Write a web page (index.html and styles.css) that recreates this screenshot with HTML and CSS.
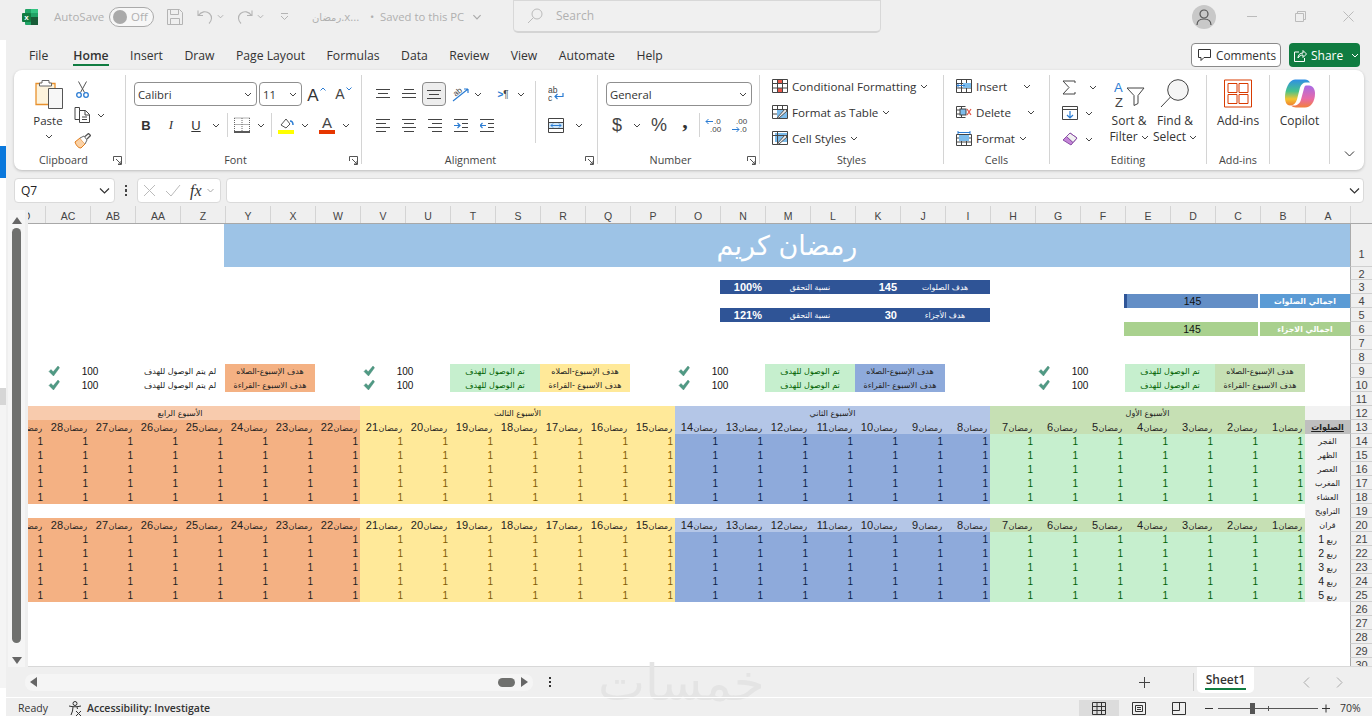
FILE: index.html
```html
<!DOCTYPE html>
<html lang="en">
<head>
<meta charset="utf-8">
<title>Excel</title>
<link rel="stylesheet" href="styles.css">
</head>
<body>
<svg class="sprite" aria-hidden="true">
<symbol id="ch" viewBox="0 0 8 5"><path d="M1 1l3 3 3-3" fill="none" stroke="#444" stroke-width="1"/></symbol>
<symbol id="chg" viewBox="0 0 8 5"><path d="M1 1l3 3 3-3" fill="none" stroke="#aaa" stroke-width="1"/></symbol>
<symbol id="launch" viewBox="0 0 9 9"><path d="M.5 5V.5H8.5V8.5H5M3 3l5 5M8 5v3H5" fill="none" stroke="#555"/></symbol>
<symbol id="ck" viewBox="0 0 12 12"><path d="M1 6.500l2-2 2.200 2.300L10 1l1.500 1.800-6 8.200z" fill="#4f9a84" stroke="#3f7f6c" stroke-width=".4"/></symbol>
</svg>
<div class="strip"><span class="s-a"></span><span class="s-b"></span><span class="s-c"></span><span class="s-d"></span><span class="s-e"></span><span class="s-f"></span><span class="s-g"></span></div>
<div class="app">
  <header class="titlebar">
    <svg class="xl" width="16" height="16" viewBox="0 0 16 16"><rect x="3" width="13" height="16" rx="1" fill="#21a366"/><rect x="9" y="8" width="7" height="8" fill="#185c37"/><rect x="9" y="0" width="7" height="4" fill="#33c481"/><rect y="4" width="9" height="9" rx="1" fill="#107c41"/><text x="4.500" y="11" text-anchor="middle" font-size="8" font-weight="700" fill="#fff" font-family="Liberation Sans">x</text></svg>
    <span class="autosave">AutoSave</span>
    <span class="toggle"><i class="knob"></i><span>Off</span></span>
    <svg class="save" width="16" height="16" viewBox="0 0 16 16"><path d="M.5.500h12l3 3v12H.5zM3.500.5v5h8v-5M3.500 15.500v-6h9v6" fill="none" stroke="#b4b4b4"/></svg>
    <svg class="undo" width="16" height="16" viewBox="0 0 16 16"><path d="M1 1.500v5h5M1.500 6.500C4 2.500 9 1.500 12.500 4.500c3 3 2.500 7-.5 10" fill="none" stroke="#b4b4b4" stroke-width="1.100"/></svg>
    <svg class="c6" width="7" height="5"><use href="#chg"/></svg>
    <svg class="redo" width="16" height="16" viewBox="0 0 16 16"><path d="M15 1.500v5h-5M14.500 6.500C12 2.500 7 1.500 3.500 4.500c-3 3-2.500 7 .5 10" fill="none" stroke="#b4b4b4" stroke-width="1.100"/></svg>
    <svg class="c6" width="7" height="5"><use href="#chg"/></svg>
    <svg class="qat" width="9" height="9" viewBox="0 0 9 9"><path d="M1 1.500h7M1 4l3.500 3.500L8 4" fill="none" stroke="#b4b4b4"/></svg>
    <span class="fname"><span class="ar">رمضان</span>.x...</span>
    <span class="saved">•&nbsp; Saved to this PC</span>
    <svg class="c9" width="10" height="6"><use href="#chg"/></svg>
    <div class="search">
      <svg width="16" height="16" viewBox="0 0 16 16"><circle cx="10" cy="6" r="5" fill="none" stroke="#bbb"/><path d="M6.500 9.500L1 15" stroke="#bbb"/></svg>
      <span>Search</span>
    </div>
    <span class="avatar"><svg width="16" height="16" viewBox="0 0 16 16"><circle cx="8" cy="5" r="4" fill="none" stroke="#555" stroke-width="1.200"/><path d="M1 16c0-4 3-6 7-6s7 2 7 6" fill="none" stroke="#555" stroke-width="1.200"/></svg></span>
    <svg class="w-min" width="10" height="2"><path d="M0 .5h10" stroke="#bbb"/></svg>
    <svg class="w-res" width="11" height="11" viewBox="0 0 11 11"><path d="M.5 2.500h8v8h-8zM2.500 2.500v-2h8v8h-2" fill="none" stroke="#bbb"/></svg>
    <svg class="w-cls" width="11" height="11" viewBox="0 0 11 11"><path d="M.5.500l10 10M10.500.5l-10 10" stroke="#bbb"/></svg>
  </header>

  <nav class="tabs">
    <span class="tab t-file">File</span>
    <span class="tab on">Home</span>
    <span class="tab">Insert</span>
    <span class="tab">Draw</span>
    <span class="tab">Page Layout</span>
    <span class="tab">Formulas</span>
    <span class="tab">Data</span>
    <span class="tab">Review</span>
    <span class="tab">View</span>
    <span class="tab">Automate</span>
    <span class="tab">Help</span>
    <span class="comments"><svg width="13" height="12" viewBox="0 0 13 12"><path d="M.5.500h12v8H6L3 11.500V8.500H.5z" fill="none" stroke="#333"/></svg>Comments</span>
    <span class="share"><svg width="13" height="13" viewBox="0 0 13 13"><path d="M5 3H.5v9.500h10V9M4 9c0-3 2-5 5-5V1.500l3.500 3.500L9 8.500V6C7 6 5 7 4 9z" fill="none" stroke="#fff"/></svg>Share<span class="sp-ch"><svg width="8" height="5"><path d="M1 1l3 3 3-3" fill="none" stroke="#fff"/></svg></span></span>
  </nav>

  <section class="ribbon">
    <div class="grp g-clip">
      <div class="body clip">
        <div class="paste">
          <svg width="28" height="31" viewBox="0 0 28 31"><path d="M1 5.500h19v21H1z" fill="#fdf3dc" stroke="#e8912d" stroke-width="1.300"/><path d="M7 5V2.500h7V5h2.500v3h-12V5z" fill="#fff" stroke="#666"/><path d="M13.500 10.500h14v20h-14z" fill="#f7f7f7" stroke="#555"/></svg>
          <span>Paste</span>
          <svg width="8" height="5"><use href="#ch"/></svg>
        </div>
        <div class="clip-col">
          <span class="bt w24"><svg width="13" height="17" viewBox="0 0 13 17"><path d="M2.500.5l6 11M10.500.5l-6 11" fill="none" stroke="#555"/><circle cx="3" cy="14" r="2.300" fill="none" stroke="#2b7cd3" stroke-width="1.300"/><circle cx="10" cy="14" r="2.300" fill="none" stroke="#2b7cd3" stroke-width="1.300"/></svg></span>
          <span class="row-c"><span class="bt w24"><svg width="16" height="16" viewBox="0 0 16 16"><path d="M5.500 3.500V.5H1v12h4.500M5.500 3.500h6l4 4v8h-10zM11 3.500V8h4.500M8 10h5M8 12.500h5" fill="none" stroke="#444"/></svg></span><svg class="clip-ch" width="8" height="5"><use href="#ch"/></svg></span>
          <span class="bt w24"><svg width="17" height="16" viewBox="0 0 17 16"><path d="M1 9l5-4 5 6-4 4c-3 0-5-3-6-6z" fill="#fbd2a6" stroke="#e07b1a"/><path d="M6 5l4-2 3 4-2 4" fill="#fff" stroke="#666"/><path d="M11 3.500L14.500.5 16.500 2.500 13 6" fill="none" stroke="#555" stroke-width="1.300"/></svg></span>
        </div>
      </div>
      <span class="gl">Clipboard</span>
      <svg class="launch" width="9" height="9"><use href="#launch"/></svg>
    </div>

    <div class="grp g-font">
      <div class="body">
        <div class="line">
          <span class="combo cb-font">Calibri<svg width="8" height="5"><use href="#ch"/></svg></span>
          <span class="combo cb-size">11<svg width="8" height="5"><use href="#ch"/></svg></span>
          <span class="bt w27 first-a"><span class="aa big">A</span><svg class="caret" width="6" height="4" viewBox="0 0 6 4"><path d="M.5 3.500L3 1l2.500 2.500" fill="none" stroke="#2b7cd3"/></svg></span>
          <span class="bt w27"><span class="aa">A</span><svg class="caret" width="6" height="4" viewBox="0 0 6 4"><path d="M.5.500L3 3 5.500.5" fill="none" stroke="#2b7cd3"/></svg></span>
        </div>
        <div class="line l2">
          <span class="bt w24 tb">B</span>
          <span class="bt w26 ti">I</span>
          <span class="bt w24 tu">U</span>
          <span class="bt w16"><svg width="8" height="5"><use href="#ch"/></svg></span>
          <i class="vs vs-f1"></i>
          <span class="bt w28"><svg width="16" height="16" viewBox="0 0 16 16"><path d="M.5 1h15M.5 1v13M15.500 1v13M8 1v13M.5 7.500h15" stroke="#666" stroke-dasharray="1 1" fill="none"/><path d="M0 15h16" stroke="#222" stroke-width="1.500"/></svg></span>
          <span class="bt w10"><svg width="8" height="5"><use href="#ch"/></svg></span>
          <i class="vs vs-f2"></i>
          <span class="bt w28"><svg width="16" height="17" viewBox="0 0 16 17"><path d="M3 8l5-6 4 5-4 4z" fill="#fff" stroke="#555"/><path d="M12 4c2 0 3 2 3 4" fill="none" stroke="#2b7cd3" stroke-width="1.500"/><rect y="13" width="16" height="4" fill="#ffff00"/></svg></span>
          <span class="bt w10"><svg width="8" height="5"><use href="#ch"/></svg></span>
          <span class="bt w28 fc"><span class="aa fca">A</span><i class="fcbar"></i></span>
          <span class="bt w10"><svg width="8" height="5"><use href="#ch"/></svg></span>
        </div>
      </div>
      <span class="gl">Font</span>
      <svg class="launch" width="9" height="9"><use href="#launch"/></svg>
    </div>

    <div class="grp g-align">
      <div class="body al-wrap">
        <div class="al-main">
          <div class="line">
            <span class="bt w26"><svg width="14" height="10" viewBox="0 0 14 10"><path d="M0 .5h14M2 4.500h10M0 8.500h14" stroke="#444"/></svg></span>
            <span class="bt w26"><svg width="14" height="10" viewBox="0 0 14 10"><path d="M2 .5h10M0 4.500h14M0 8.500h14" stroke="#444"/></svg></span>
            <span class="bt w24 sel"><svg width="14" height="10" viewBox="0 0 14 10"><path d="M0 1.500h14M2 5.500h10M0 9.500h14" stroke="#444"/></svg></span>
            <span class="bt w26 ml2"><svg width="18" height="16" viewBox="0 0 18 16"><path d="M1 15L16 3M16 3h-4M16 3v4" fill="none" stroke="#2b7cd3" stroke-width="1.200"/><text x="1" y="9" font-size="8" fill="#444" transform="rotate(-40 5 6)" font-family="Liberation Sans">ab</text></svg></span>
            <span class="bt w8"><svg width="8" height="5"><use href="#ch"/></svg></span>
            <span class="bt w24 ml9 para"><i class="para-a">&gt;</i>¶</span>
            <span class="bt w12"><svg width="8" height="5"><use href="#ch"/></svg></span>
          </div>
          <div class="line l2">
            <span class="bt w26"><svg width="14" height="13" viewBox="0 0 14 13"><path d="M0 .5h14M0 4.500h10M0 8.500h14M0 12.500h10" stroke="#444"/></svg></span>
            <span class="bt w26"><svg width="14" height="13" viewBox="0 0 14 13"><path d="M0 .5h14M2 4.500h10M0 8.500h14M2 12.500h10" stroke="#444"/></svg></span>
            <span class="bt w26"><svg width="14" height="13" viewBox="0 0 14 13"><path d="M0 .5h14M4 4.500h10M0 8.500h14M4 12.500h10" stroke="#444"/></svg></span>
            <span class="bt w26"><svg width="14" height="13" viewBox="0 0 14 13"><path d="M0 .5h14M8 4.500h6M8 8.500h6M0 12.500h14" stroke="#444"/><path d="M0 6.500h6M3.500 4L6 6.500 3.500 9" fill="none" stroke="#2b7cd3" stroke-width="1.200"/></svg></span>
            <span class="bt w26"><svg width="14" height="13" viewBox="0 0 14 13"><path d="M0 .5h14M8 4.500h6M8 8.500h6M0 12.500h14" stroke="#444"/><path d="M6 6.500H0M2.500 4L0 6.500 2.500 9" fill="none" stroke="#2b7cd3" stroke-width="1.200"/></svg></span>
          </div>
        </div>
        <i class="vs-tall"></i>
        <div class="al-side">
          <span class="bt w25"><svg width="16" height="16" viewBox="0 0 16 16"><text x="0" y="7" font-size="8.500" fill="#444" font-family="Liberation Sans">ab</text><text x="0" y="15" font-size="8.500" fill="#444" font-family="Liberation Sans">c</text><path d="M15 7v3.500H7M9.500 8L7 10.500 9.500 13" fill="none" stroke="#2b7cd3" stroke-width="1.200"/></svg></span>
          <span class="row-c merge"><span class="bt w25"><svg width="16" height="15" viewBox="0 0 16 15"><path d="M.5.500h15v14H.5zM.5 4.500h15M.5 10.500h15" fill="#fff" stroke="#444"/><rect x="1" y="5" width="14" height="5" fill="#cfe6f8"/><path d="M3 7.500h10M5 5.500l-2 2 2 2M11 5.500l2 2-2 2" fill="none" stroke="#2b7cd3"/></svg></span><svg class="merge-ch" width="8" height="5"><use href="#ch"/></svg></span>
        </div>
      </div>
      <span class="gl">Alignment</span>
      <svg class="launch" width="9" height="9"><use href="#launch"/></svg>
    </div>

    <div class="grp g-num">
      <div class="body">
        <div class="line"><span class="combo cb-num">General<svg width="8" height="5"><use href="#ch"/></svg></span></div>
        <div class="line l2">
          <span class="bt w22 sym">$</span>
          <span class="bt w18"><svg width="8" height="5"><use href="#ch"/></svg></span>
          <span class="bt w26 sym">%</span>
          <span class="bt w26 comma">,</span>
          <i class="vs vs-n"></i>
          <span class="bt w26"><svg width="17" height="16" viewBox="0 0 17 16"><text x="9" y="7" font-size="8" fill="#444" font-family="Liberation Sans">.0</text><text x="5" y="15" font-size="8" fill="#444" font-family="Liberation Sans">.00</text><path d="M8 4.500H1M3.500 2L1 4.500 3.500 7" fill="none" stroke="#2b7cd3"/></svg></span>
          <span class="bt w26"><svg width="17" height="16" viewBox="0 0 17 16"><text x="5" y="7" font-size="8" fill="#444" font-family="Liberation Sans">.00</text><text x="9" y="15" font-size="8" fill="#444" font-family="Liberation Sans">.0</text><path d="M1 12.500h7M5.500 10L8 12.500 5.500 15" fill="none" stroke="#2b7cd3"/></svg></span>
        </div>
      </div>
      <span class="gl">Number</span>
      <svg class="launch" width="9" height="9"><use href="#launch"/></svg>
    </div>

    <div class="grp g-sty">
      <div class="rows">
        <span class="ri"><svg width="16" height="14" viewBox="0 0 16 14"><path d="M.5.500h15v13H.5z" fill="#fff" stroke="#444"/><rect x="5" y="1" width="6" height="4" fill="#e8574a"/><rect x="5" y="9" width="6" height="4" fill="#e8574a"/><path d="M.5 4.500h15M.5 9h15M5.500.5v13M10.500.5v13" stroke="#444" fill="none"/></svg>Conditional Formatting<svg width="8" height="5"><use href="#ch"/></svg></span>
        <span class="ri"><svg width="16" height="14" viewBox="0 0 16 14"><path d="M.5.500h15v13H.5zM.5 4.500h15M.5 9h15M5.500.5v13M10.500.5v13" fill="#fff" stroke="#444"/><rect x="5" y="5" width="10" height="8" fill="#7cbcec"/><path d="M5 13l8-9 2 2-8 7z" fill="#eee" stroke="#555"/></svg>Format as Table<svg width="8" height="5"><use href="#ch"/></svg></span>
        <span class="ri"><svg width="16" height="14" viewBox="0 0 16 14"><path d="M.5.500h15v13H.5z" fill="#fff" stroke="#444"/><rect x="3" y="2" width="12" height="9" fill="#7cbcec"/><path d="M.5 4.500h15M5.500.5v13" stroke="#444" fill="none"/><path d="M5 13l8-9 2 2-8 7z" fill="#eee" stroke="#555"/></svg>Cell Styles<svg width="8" height="5"><use href="#ch"/></svg></span>
      </div>
      <span class="gl">Styles</span>
    </div>

    <div class="grp g-cells">
      <div class="rows">
        <span class="ri"><svg width="16" height="14" viewBox="0 0 16 14"><path d="M.5.500h15v13H.5zM.5 4.500h15M.5 9h15M5.500.5v13M10.500.5v13" fill="#fff" stroke="#444"/><rect x="7" y="4" width="8" height="5" fill="#7cbcec"/><path d="M9 6.500H1M3 4.500l-2 2 2 2" fill="none" stroke="#2b7cd3"/></svg><span class="lbl l-ins">Insert</span><svg width="8" height="5"><use href="#ch"/></svg></span>
        <span class="ri"><svg width="16" height="14" viewBox="0 0 16 14"><path d="M.5 1.500h9M.5 12.500h9M.5 1.500v11M5.500 1.500v11M.5 5h9M.5 9h9" fill="none" stroke="#444"/><rect x="4" y="4" width="6" height="6" fill="#7cbcec" stroke="#444"/><path d="M11 4l4 6M15 4l-4 6" stroke="#e8574a" stroke-width="1.300"/></svg><span class="lbl l-del">Delete</span><svg width="8" height="5"><use href="#ch"/></svg></span>
        <span class="ri"><svg width="16" height="15" viewBox="0 0 16 15"><path d="M.5 3.500h15v11H.5zM.5 7h15M.5 11h15M5.500 3.500v11M10.500 3.500v11" fill="#fff" stroke="#444"/><rect x="3" y="4" width="10" height="6" fill="#7cbcec"/><path d="M2 1.500h12M2 0v3M14 0v3" stroke="#2b7cd3"/></svg><span class="lbl">Format</span><svg width="8" height="5"><use href="#ch"/></svg></span>
      </div>
      <span class="gl">Cells</span>
    </div>

    <div class="grp g-edit">
      <div class="body ed">
        <div class="ed-col">
          <span class="ri2"><svg class="ic" width="14" height="15" viewBox="0 0 14 15"><path d="M13 3V1H1l6 6.500L1 14h12v-2" fill="none" stroke="#444"/></svg><svg class="e1" width="8" height="5"><use href="#ch"/></svg></span>
          <span class="ri2"><svg class="ic" width="16" height="14" viewBox="0 0 16 14"><path d="M.5.500h15v13H.5zM.5 3.500h15" fill="#fff" stroke="#444"/><path d="M8 5v7M5 9l3 3 3-3" fill="none" stroke="#2b7cd3" stroke-width="1.200"/></svg><svg class="e2" width="8" height="5"><use href="#ch"/></svg></span>
          <span class="ri2"><svg class="ic" width="16" height="14" viewBox="0 0 16 14"><path d="M1 8l7-7 7 5-6 7z" fill="#c586d8" stroke="#8a4fa5"/><path d="M4.500 4.500l6.500 6" stroke="#8a4fa5"/><path d="M8 1l7 5-4 4.500-6.500-6z" fill="#f0f0f0" stroke="#8a4fa5"/></svg><svg class="e2" width="8" height="5"><use href="#ch"/></svg></span>
        </div>
        <div class="big sort">
          <svg width="31" height="28" viewBox="0 0 31 28"><text x="0" y="12" font-size="13" fill="#2b7cd3" font-family="Liberation Sans">A</text><text x="1" y="27" font-size="13" fill="#444" font-family="Liberation Sans">Z</text><path d="M13 8.500h17L24 16v8l-4 2V16z" fill="#fff" stroke="#444"/></svg>
          <span>Sort &amp;</span><span>Filter<svg width="8" height="5"><use href="#ch"/></svg></span>
        </div>
        <div class="big find">
          <svg width="30" height="29" viewBox="0 0 30 29"><circle cx="18" cy="11" r="10.300" fill="#f5f5f5" stroke="#444"/><path d="M10.500 18L1 28" stroke="#444"/></svg>
          <span>Find &amp;</span><span>Select<svg width="8" height="5"><use href="#ch"/></svg></span>
        </div>
      </div>
      <span class="gl">Editing</span>
    </div>

    <div class="grp g-add">
      <div class="big">
        <svg width="28" height="28" viewBox="0 0 28 28"><path d="M.5.500h27v27H.5z" fill="none" stroke="#d83b01"/><path d="M4 4h9v9H4zM15 4h9v9h-9zM4 15h9v9H4zM15 15h9v9h-9z" fill="none" stroke="#d83b01"/></svg>
        <span>Add-ins</span>
      </div>
      <span class="gl">Add-ins</span>
    </div>

    <div class="grp g-cop">
      <div class="big">
        <svg width="30" height="28" viewBox="0 0 30 28"><defs><linearGradient id="cpa" x1="0" y1="0" x2="0" y2="1"><stop offset="0" stop-color="#2f8fe6"/><stop offset=".45" stop-color="#46c38a"/><stop offset=".75" stop-color="#f4c430"/><stop offset="1" stop-color="#f08030"/></linearGradient><linearGradient id="cpb" x1="0" y1="0" x2="0" y2="1"><stop offset="0" stop-color="#a86be6"/><stop offset=".6" stop-color="#e86aa8"/><stop offset="1" stop-color="#f2803a"/></linearGradient></defs><path d="M10 0h10c2 0 4 1 5 3h-4c-3 0-5 2-6 5l-3 12c-1 3-3 6-7 6-3 0-5-3-5-8 0-8 4-18 10-18z" fill="url(#cpa)"/><path d="M21 6h3c4 0 6 4 6 8 0 8-4 14-10 14h-9c-2 0-4-1-5-2h3c3 0 6-2 7-6l3-11c.500-2 1-3 2-3z" fill="url(#cpb)"/></svg>
        <span>Copilot</span>
      </div>
    </div>

    <div class="grp-end"><svg width="11" height="6" viewBox="0 0 11 6"><path d="M1 .5l4.500 4.500L10 .5" fill="none" stroke="#333"/></svg></div>
  </section>

  <div class="fbar">
    <span class="namebox">Q7<svg width="11" height="6" viewBox="0 0 11 6"><path d="M1 .5l4.500 4.500L10 .5" fill="none" stroke="#333" stroke-width="1.200"/></svg></span>
    <span class="dots"><i></i><i></i><i></i></span>
    <span class="fbtns">
      <svg width="13" height="13" viewBox="0 0 13 13"><path d="M1 1l11 11M12 1L1 12" stroke="#bbb"/></svg>
      <svg width="16" height="13" viewBox="0 0 16 13"><path d="M1 7l5 5L15 1" fill="none" stroke="#bbb"/></svg>
      <em>fx</em>
      <svg width="9" height="5"><use href="#chg"/></svg>
    </span>
    <span class="finput"><svg width="11" height="6" viewBox="0 0 11 6"><path d="M1 .5l4.500 4.500L10 .5" fill="none" stroke="#333" stroke-width="1.200"/></svg></span>
  </div>

  <main class="work">
    <div class="vscroll">
      <svg class="va" width="10" height="7" viewBox="0 0 10 7"><path d="M5 0l5 7H0z" fill="#666"/></svg>
      <i class="thumb"></i>
      <svg class="vb" width="10" height="7" viewBox="0 0 10 7"><path d="M5 7L0 0h10z" fill="#666"/></svg>
    </div>
    <div class="sheet">
      <div class="r hd"><span></span><span>A</span><span>B</span><span>C</span><span>D</span><span>E</span><span>F</span><span>G</span><span>H</span><span>I</span><span>J</span><span>K</span><span>L</span><span>M</span><span>N</span><span>O</span><span>P</span><span>Q</span><span>R</span><span>S</span><span>T</span><span>U</span><span>V</span><span>W</span><span>X</span><span>Y</span><span>Z</span><span>AA</span><span>AB</span><span>AC</span><span>AD</span></div>
      <div class="r tall"><span class="n">1</span><span class="title s25">رمضان كريم</span></div>
      <div class="r r2"><span class="n">2</span></div>
      <div class="r"><span class="n">3</span><span class="s8"></span><span class="kp s2">هدف الصلوات</span><span class="kp kv">145</span><span class="kp s2">نسبة التحقق</span><span class="kp kv">100%</span></div>
      <div class="r"><span class="n">4</span><span class="tot tb1 s2">اجمالي الصلوات</span><span class="bar b1 s3"><span>145</span></span></div>
      <div class="r"><span class="n">5</span><span class="s8"></span><span class="kp s2">هدف الأجزاء</span><span class="kp kv">30</span><span class="kp s2">نسبة التحقق</span><span class="kp kv">121%</span></div>
      <div class="r"><span class="n">6</span><span class="tot tb2 s2">اجمالي الاجزاء</span><span class="bar b2 s3"><span>145</span></span></div>
      <div class="r"><span class="n">7</span></div>
      <div class="r"><span class="n">8</span></div>
      <div class="r"><span class="n">9</span><span></span>
        <span class="gl1 fg s2">هدف الإسبوع-الصلاه</span><span class="gok s2">تم الوصول للهدف</span><span class="kpi s2"><svg width="12" height="12"><use href="#ck"/></svg><span>100</span></span><span class="s2"></span>
        <span class="gl1 fb s2">هدف الإسبوع-الصلاه</span><span class="gok s2">تم الوصول للهدف</span><span class="kpi s2"><svg width="12" height="12"><use href="#ck"/></svg><span>100</span></span><span></span>
        <span class="gl1 fy s2">هدف الإسبوع-الصلاه</span><span class="gok s2">تم الوصول للهدف</span><span class="kpi s2"><svg width="12" height="12"><use href="#ck"/></svg><span>100</span></span><span></span>
        <span class="gl1 fo s2">هدف الإسبوع-الصلاه</span><span class="gl1 s2">لم يتم الوصول للهدف</span><span class="kpi s2"><svg width="12" height="12"><use href="#ck"/></svg><span>100</span></span></div>
      <div class="r"><span class="n">10</span><span></span>
        <span class="gl1 fg s2">هدف الاسبوع -القراءة</span><span class="gok s2">تم الوصول للهدف</span><span class="kpi s2"><svg width="12" height="12"><use href="#ck"/></svg><span>100</span></span><span class="s2"></span>
        <span class="gl1 fb s2">هدف الاسبوع -القراءة</span><span class="gok s2">تم الوصول للهدف</span><span class="kpi s2"><svg width="12" height="12"><use href="#ck"/></svg><span>100</span></span><span></span>
        <span class="gl1 fy s2">هدف الاسبوع -القراءة</span><span class="gok s2">تم الوصول للهدف</span><span class="kpi s2"><svg width="12" height="12"><use href="#ck"/></svg><span>100</span></span><span></span>
        <span class="gl1 fo s2">هدف الاسبوع -القراءة</span><span class="gl1 s2">لم يتم الوصول للهدف</span><span class="kpi s2"><svg width="12" height="12"><use href="#ck"/></svg><span>100</span></span></div>
      <div class="r"><span class="n">11</span></div>
      <div class="r r12"><span class="n">12</span><span class="lb"></span><div class="wk g">الأسبوع الأول</div><div class="wk b">الأسبوع الثاني</div><div class="wk y">الأسبوع الثالث</div><div class="wk o">الأسبوع الرابع</div></div>
      <div class="r hr"><span class="n">13</span><span class="lb lbh">الصلوات</span><div class="wk g"><span>رمضان <em>1</em></span><span>رمضان <em>2</em></span><span>رمضان <em>3</em></span><span>رمضان <em>4</em></span><span>رمضان <em>5</em></span><span>رمضان <em>6</em></span><span>رمضان <em>7</em></span></div><div class="wk b"><span>رمضان <em>8</em></span><span>رمضان <em>9</em></span><span>رمضان <em>10</em></span><span>رمضان <em>11</em></span><span>رمضان <em>12</em></span><span>رمضان <em>13</em></span><span>رمضان <em>14</em></span></div><div class="wk y"><span>رمضان <em>15</em></span><span>رمضان <em>16</em></span><span>رمضان <em>17</em></span><span>رمضان <em>18</em></span><span>رمضان <em>19</em></span><span>رمضان <em>20</em></span><span>رمضان <em>21</em></span></div><div class="wk o"><span>رمضان <em>22</em></span><span>رمضان <em>23</em></span><span>رمضان <em>24</em></span><span>رمضان <em>25</em></span><span>رمضان <em>26</em></span><span>رمضان <em>27</em></span><span>رمضان <em>28</em></span><span>رمضان <em>29</em></span></div></div>
      <div class="r"><span class="n">14</span><span class="lb">الفجر</span><div class="wk g"><span>1</span><span>1</span><span>1</span><span>1</span><span>1</span><span>1</span><span>1</span></div><div class="wk b"><span>1</span><span>1</span><span>1</span><span>1</span><span>1</span><span>1</span><span>1</span></div><div class="wk y"><span>1</span><span>1</span><span>1</span><span>1</span><span>1</span><span>1</span><span>1</span></div><div class="wk o"><span>1</span><span>1</span><span>1</span><span>1</span><span>1</span><span>1</span><span>1</span><span>1</span></div></div>
      <div class="r"><span class="n">15</span><span class="lb">الظهر</span><div class="wk g"><span>1</span><span>1</span><span>1</span><span>1</span><span>1</span><span>1</span><span>1</span></div><div class="wk b"><span>1</span><span>1</span><span>1</span><span>1</span><span>1</span><span>1</span><span>1</span></div><div class="wk y"><span>1</span><span>1</span><span>1</span><span>1</span><span>1</span><span>1</span><span>1</span></div><div class="wk o"><span>1</span><span>1</span><span>1</span><span>1</span><span>1</span><span>1</span><span>1</span><span>1</span></div></div>
      <div class="r"><span class="n">16</span><span class="lb">العصر</span><div class="wk g"><span>1</span><span>1</span><span>1</span><span>1</span><span>1</span><span>1</span><span>1</span></div><div class="wk b"><span>1</span><span>1</span><span>1</span><span>1</span><span>1</span><span>1</span><span>1</span></div><div class="wk y"><span>1</span><span>1</span><span>1</span><span>1</span><span>1</span><span>1</span><span>1</span></div><div class="wk o"><span>1</span><span>1</span><span>1</span><span>1</span><span>1</span><span>1</span><span>1</span><span>1</span></div></div>
      <div class="r"><span class="n">17</span><span class="lb">المغرب</span><div class="wk g"><span>1</span><span>1</span><span>1</span><span>1</span><span>1</span><span>1</span><span>1</span></div><div class="wk b"><span>1</span><span>1</span><span>1</span><span>1</span><span>1</span><span>1</span><span>1</span></div><div class="wk y"><span>1</span><span>1</span><span>1</span><span>1</span><span>1</span><span>1</span><span>1</span></div><div class="wk o"><span>1</span><span>1</span><span>1</span><span>1</span><span>1</span><span>1</span><span>1</span><span>1</span></div></div>
      <div class="r"><span class="n">18</span><span class="lb">العشاء</span><div class="wk g"><span>1</span><span>1</span><span>1</span><span>1</span><span>1</span><span>1</span><span>1</span></div><div class="wk b"><span>1</span><span>1</span><span>1</span><span>1</span><span>1</span><span>1</span><span>1</span></div><div class="wk y"><span>1</span><span>1</span><span>1</span><span>1</span><span>1</span><span>1</span><span>1</span></div><div class="wk o"><span>1</span><span>1</span><span>1</span><span>1</span><span>1</span><span>1</span><span>1</span><span>1</span></div></div>
      <div class="r"><span class="n">19</span><span class="lb">التراويح</span></div>
      <div class="r hr"><span class="n">20</span><span class="lb">قران</span><div class="wk g"><span>رمضان <em>1</em></span><span>رمضان <em>2</em></span><span>رمضان <em>3</em></span><span>رمضان <em>4</em></span><span>رمضان <em>5</em></span><span>رمضان <em>6</em></span><span>رمضان <em>7</em></span></div><div class="wk b"><span>رمضان <em>8</em></span><span>رمضان <em>9</em></span><span>رمضان <em>10</em></span><span>رمضان <em>11</em></span><span>رمضان <em>12</em></span><span>رمضان <em>13</em></span><span>رمضان <em>14</em></span></div><div class="wk y"><span>رمضان <em>15</em></span><span>رمضان <em>16</em></span><span>رمضان <em>17</em></span><span>رمضان <em>18</em></span><span>رمضان <em>19</em></span><span>رمضان <em>20</em></span><span>رمضان <em>21</em></span></div><div class="wk o"><span>رمضان <em>22</em></span><span>رمضان <em>23</em></span><span>رمضان <em>24</em></span><span>رمضان <em>25</em></span><span>رمضان <em>26</em></span><span>رمضان <em>27</em></span><span>رمضان <em>28</em></span><span>رمضان <em>29</em></span></div></div>
      <div class="r"><span class="n">21</span><span class="lb">ربع <em>1</em></span><div class="wk g"><span>1</span><span>1</span><span>1</span><span>1</span><span>1</span><span>1</span><span>1</span></div><div class="wk b"><span>1</span><span>1</span><span>1</span><span>1</span><span>1</span><span>1</span><span>1</span></div><div class="wk y"><span>1</span><span>1</span><span>1</span><span>1</span><span>1</span><span>1</span><span>1</span></div><div class="wk o"><span>1</span><span>1</span><span>1</span><span>1</span><span>1</span><span>1</span><span>1</span><span>1</span></div></div>
      <div class="r"><span class="n">22</span><span class="lb">ربع <em>2</em></span><div class="wk g"><span>1</span><span>1</span><span>1</span><span>1</span><span>1</span><span>1</span><span>1</span></div><div class="wk b"><span>1</span><span>1</span><span>1</span><span>1</span><span>1</span><span>1</span><span>1</span></div><div class="wk y"><span>1</span><span>1</span><span>1</span><span>1</span><span>1</span><span>1</span><span>1</span></div><div class="wk o"><span>1</span><span>1</span><span>1</span><span>1</span><span>1</span><span>1</span><span>1</span><span>1</span></div></div>
      <div class="r"><span class="n">23</span><span class="lb">ربع <em>3</em></span><div class="wk g"><span>1</span><span>1</span><span>1</span><span>1</span><span>1</span><span>1</span><span>1</span></div><div class="wk b"><span>1</span><span>1</span><span>1</span><span>1</span><span>1</span><span>1</span><span>1</span></div><div class="wk y"><span>1</span><span>1</span><span>1</span><span>1</span><span>1</span><span>1</span><span>1</span></div><div class="wk o"><span>1</span><span>1</span><span>1</span><span>1</span><span>1</span><span>1</span><span>1</span><span>1</span></div></div>
      <div class="r"><span class="n">24</span><span class="lb">ربع <em>4</em></span><div class="wk g"><span>1</span><span>1</span><span>1</span><span>1</span><span>1</span><span>1</span><span>1</span></div><div class="wk b"><span>1</span><span>1</span><span>1</span><span>1</span><span>1</span><span>1</span><span>1</span></div><div class="wk y"><span>1</span><span>1</span><span>1</span><span>1</span><span>1</span><span>1</span><span>1</span></div><div class="wk o"><span>1</span><span>1</span><span>1</span><span>1</span><span>1</span><span>1</span><span>1</span><span>1</span></div></div>
      <div class="r"><span class="n">25</span><span class="lb">ربع <em>5</em></span><div class="wk g"><span>1</span><span>1</span><span>1</span><span>1</span><span>1</span><span>1</span><span>1</span></div><div class="wk b"><span>1</span><span>1</span><span>1</span><span>1</span><span>1</span><span>1</span><span>1</span></div><div class="wk y"><span>1</span><span>1</span><span>1</span><span>1</span><span>1</span><span>1</span><span>1</span></div><div class="wk o"><span>1</span><span>1</span><span>1</span><span>1</span><span>1</span><span>1</span><span>1</span><span>1</span></div></div>
      <div class="r"><span class="n">26</span></div>
      <div class="r"><span class="n">27</span></div>
      <div class="r"><span class="n">28</span></div>
      <div class="r"><span class="n">29</span></div>
      <div class="r"><span class="n">30</span></div>
    </div>
  </main>

  <div class="sheetbar">
    <div class="hscroll">
      <svg width="7" height="10" viewBox="0 0 7 10"><path d="M0 5l7-5v10z" fill="#666"/></svg>
      <i class="hthumb"></i>
      <svg width="7" height="10" viewBox="0 0 7 10"><path d="M7 5L0 0v10z" fill="#666"/></svg>
    </div>
    <span class="split"><i></i><i></i><i></i></span>
    <svg class="plus" width="11" height="11" viewBox="0 0 11 11"><path d="M5.500 0v11M0 5.500h11" stroke="#444"/></svg>
    <i class="sb-sep"></i>
    <span class="stab">Sheet1</span>
    <svg class="nav1" width="7" height="11" viewBox="0 0 7 11"><path d="M6 .5L1 5.500l5 5" fill="none" stroke="#aaa"/></svg>
    <svg class="nav2" width="7" height="11" viewBox="0 0 7 11"><path d="M1 .5l5 5-5 5" fill="none" stroke="#aaa"/></svg>
    <span class="mark">خمسات</span>
  </div>

  <footer class="status">
    <span class="ready">Ready</span>
    <svg class="acc" width="15" height="15" viewBox="0 0 15 15"><circle cx="7" cy="2.500" r="2" fill="none" stroke="#333"/><path d="M1 5c4 1 8 1 12 0M5 6l-.5 4L3 14M9 6l.5 2M8 10l5 5M13 10l-5 5" fill="none" stroke="#333"/></svg>
    <span class="acct">Accessibility: Investigate</span>
    <span class="view on"><svg width="14" height="13" viewBox="0 0 14 13"><path d="M.5.500h13v12H.5zM.5 4.500h13M.5 8.500h13M5 .5v12M9.500.5v12" fill="none" stroke="#333"/></svg></span>
    <span class="view"><svg width="14" height="13" viewBox="0 0 14 13"><path d="M.5.500h13v12H.5z" fill="none" stroke="#333"/><path d="M3.500 3.500h7v6h-7zM5 5.500h4M5 7.500h4" fill="none" stroke="#333"/></svg></span>
    <span class="view"><svg width="14" height="13" viewBox="0 0 14 13"><path d="M.5 12.500V.5h13v12M.5 8.500h7v-8" fill="none" stroke="#333"/><path d="M.5 12.500h13" stroke="#333"/></svg></span>
    <svg class="zm" width="8" height="9" viewBox="0 0 8 9"><path d="M0 4.500h8" stroke="#333"/></svg>
    <span class="slider"><i class="tick"></i><i class="sth"></i></span>
    <svg class="zp" width="8" height="9" viewBox="0 0 8 9"><path d="M0 4.500h8M4 .5v8" stroke="#333"/></svg>
    <span class="pct">70%</span>
  </footer>
</div>
</body>
</html>
```

FILE: styles.css
```css
* { box-sizing: border-box; }
html, body { margin: 0; height: 716px; overflow: hidden; }
body { display: flex; font-family: "Open Sans", "Noto Sans", sans-serif; color: #333; background: #fff; }
i { font-style: normal; }
svg { display: block; flex: none; }
.sprite { display: none; }

.strip { width: 6px; display: flex; flex-direction: column; flex: none; }
.s-a { height: 40px; background: #efefef; }
.s-b { height: 106px; background: #fff; }
.s-c { height: 32px; background: #0a78dc; }
.s-d { height: 210px; background: #fff; }
.s-e { height: 17px; background: #d6d6d6; }
.s-f { height: 283px; background: #f4f4f4; }
.s-g { height: 28px; background: #fff; }

.app { width: 1366px; height: 716px; background: #efefef; display: flex; flex-direction: column; position: relative; }

/* title bar */
.titlebar { height: 38px; display: flex; align-items: center; color: #b0b0b0; font-size: 11.500px; padding-bottom: 5px; flex: none; }
.xl { margin-left: 16px; }
.autosave { margin-left: 16px; width: 52px; font-size: 11.500px; }
.toggle { margin-left: 3px; width: 45px; height: 20px; border: 1px solid #aaa; border-radius: 10px; display: flex; align-items: center; padding: 0 3px; background: #f7f7f7; gap: 4px; }
.knob { width: 14px; height: 14px; border-radius: 50%; background: #aaa; }
.save { margin-left: 13px; }
.undo { margin-left: 14px; }
.c6 { margin-left: 4px; }
.redo { margin-left: 13px; }
.qat { margin-left: 16px; }
.fname { margin-left: 23px; width: 58px; font-size: 11.500px; white-space: nowrap; }
.ar { font-family: "DejaVu Sans", sans-serif; font-size: 10px; }
.saved { white-space: nowrap; width: 97px; font-size: 11.300px; }
.c9 { margin-left: 5px; }
.search { margin-left: 31px; width: 368px; height: 33px; margin-top: -1px; border: 1px solid #d8d8d8; border-bottom: 2px solid #d4d4d4; border-radius: 0 0 5px 5px; display: flex; align-items: center; padding-left: 13px; gap: 13px; font-size: 12px; background: #f0f0f0; }
.avatar { margin-left: 311px; width: 24px; height: 24px; border-radius: 50%; background: #c8c8c8; display: flex; align-items: center; justify-content: center; }
.w-min { margin-left: 31px; }
.w-res { margin-left: 38px; }
.w-cls { margin-left: 37px; }

/* tabs */
.tabs { height: 32px; display: flex; align-items: center; flex: none; position: relative; font-size: 12.200px; color: #333; padding-left: 23px; }
.tab { margin-right: 21.500px; height: 32px; display: flex; align-items: center; padding-top: 3px; position: relative; white-space: nowrap; }
.t-file { margin-right: 25px; }
.tab.on { font-weight: 600; }
.tab.on::after { content: ""; position: absolute; left: 0; right: 0; bottom: 4px; height: 2px; background: #107c41; }
.comments { position: absolute; left: 1185px; top: 5px; width: 90px; height: 24px; background: #fff; border: 1px solid #8a8a8a; border-radius: 4px; display: flex; align-items: center; gap: 5px; padding-left: 6px; font-size: 11.800px; }
.share { position: absolute; left: 1283px; top: 5px; width: 71px; height: 24px; background: #107c41; color: #fff; border-radius: 4px; display: flex; align-items: center; gap: 4px; padding-left: 5px; font-size: 12px; }
.sp-ch { margin-left: 4px; }

/* ribbon */
.ribbon { height: 100px; margin: 0 8px; width: 1350px; background: #fff; border-radius: 8px; box-shadow: 0 1px 3px rgba(0,0,0,.22); display: flex; flex: none; padding-top: 5px; }
.grp { position: relative; height: 89px; display: flex; flex-direction: column; border-right: 1px solid #d4d4d4; flex: none; }
.g-clip { width: 112px; }
.g-font { width: 236px; }
.g-align { width: 236px; }
.g-num { width: 162px; }
.g-sty { width: 184px; }
.g-cells { width: 106px; }
.g-edit { width: 157px; }
.g-add { width: 63px; }
.g-cop { width: 60px; }
.grp-end { flex: 1; display: flex; justify-content: center; align-items: flex-end; padding: 0 0 7px 5px; height: 89px; }
.body { height: 76px; padding: 7px 0 0 8px; }
.gl { position: absolute; left: 0; right: 0; bottom: -3px; height: 14px; line-height: 14px; text-align: center; font-size: 10.800px; color: #444; }
.g-clip .gl { padding-right: 12px; }
.g-font .gl { padding-right: 16px; }
.g-align .gl { padding-right: 18px; }
.g-num .gl { padding-right: 16px; }
.launch { position: absolute; right: 3px; bottom: -1px; }
.line { display: flex; align-items: center; height: 24px; }
.l2 { margin-top: 7px; }
.bt { display: flex; align-items: center; justify-content: center; height: 24px; flex: none; position: relative; }
.w8 { width: 8px; } .w10 { width: 10px; } .w12 { width: 12px; } .w16 { width: 16px; } .w18 { width: 18px; }
.w22 { width: 22px; } .w24 { width: 24px; } .w25 { width: 25px; } .w26 { width: 26px; } .w27 { width: 27px; } .w28 { width: 28px; }
.ml2 { margin-left: 2px; } .ml9 { margin-left: 9px; }
.sel { background: #ededed; border: 1px solid #8a8a8a; border-radius: 4px; }
.vs { width: 1px; height: 24px; background: #d4d4d4; flex: none; }
.vs-f1 { margin-left: 3px; }
.vs-f2 { margin-left: 5px; }
.vs-n { margin-left: 1px; }
.combo { display: flex; align-items: center; justify-content: space-between; height: 24px; border: 1px solid #8f8f8f; border-radius: 4px; background: #fff; padding: 0 4px 0 3px; font-size: 11.300px; color: #333; flex: none; }
.cb-font { width: 123px; }
.cb-size { width: 43px; margin-left: 2px; }
.cb-num { width: 146px; }
.first-a { margin-left: 1px; }
.aa { font-family: "Liberation Sans", sans-serif; font-size: 14px; color: #444; }
.aa.big { font-size: 17px; }
.caret { margin: -10px 0 0 1px; }
.tb { font: 700 13px "Liberation Sans", sans-serif; color: #333; }
.ti { font: italic 13px "Liberation Serif", serif; color: #333; }
.tu { font: 13px "Liberation Sans", sans-serif; text-decoration: underline; color: #333; }
.fc { flex-direction: column; }
.fca { font-size: 15px; line-height: 13px; }
.fcbar { width: 16px; height: 4px; background: #e63600; margin-top: 1px; }
.w28.fc { margin-left: 3px; }
.al-wrap { display: flex; }
.al-main { width: 165px; }
.vs-tall { width: 1px; height: 62px; margin-top: -1px; background: #d4d4d4; flex: none; }
.al-side { padding-left: 7px; }
.al-side .row-c { margin-top: 7px; }
.row-c { display: flex; align-items: center; }
.merge-ch { margin-left: 7px; }
.para { font: 10px "Liberation Sans", sans-serif; color: #444; }
.para-a { color: #2b7cd3; font-weight: 700; }
.sym { font: 18px "Liberation Sans", sans-serif; color: #444; }
.comma { font: 700 22px/14px "Liberation Serif", serif; color: #333; padding-bottom: 8px; }

/* clipboard */
.clip { display: flex; padding: 3px 0 0 20px; }
.paste { width: 29px; display: flex; flex-direction: column; align-items: center; font-size: 11.500px; color: #333; }
.paste span { margin-top: 3px; margin-left: -1px; height: 18px; line-height: 18px; }
.paste svg:last-child { margin-top: 4px; }
.clip-col { margin-left: 7px; display: flex; flex-direction: column; gap: 2px; margin-top: -1px; }
.clip-ch { margin-left: 3px; }

.rows { padding: 0 0 0 12px; margin-top: -2px; }
.ri { display: flex; align-items: center; height: 26px; font-size: 11.600px; color: #333; gap: 4px; white-space: nowrap; }
.lbl { display: block; }
.l-ins { width: 43px; }
.l-del { width: 47px; }

.ed { display: flex; padding: 0; }
.ed-col { width: 55px; margin-top: -1px; }
.ri2 { display: flex; align-items: center; height: 26px; }
.ic { margin-left: 12px; }
.e1 { margin-left: 13px; }
.e2 { margin-left: 7px; }
.big { display: flex; flex-direction: column; align-items: center; font-size: 12px; line-height: 16px; color: #333; padding-top: 4px; white-space: nowrap; }
.big > svg { margin-bottom: 5px; height: 29px; }
.big span { display: flex; align-items: center; gap: 3px; }
.sort { width: 48px; }
.find { width: 44px; }

/* formula bar */
.fbar { height: 25px; margin: 8px 8px 3px; display: flex; align-items: stretch; flex: none; width: 1350px; }
.namebox { width: 101px; background: #fff; border: 1px solid #dadada; border-radius: 4px; display: flex; align-items: center; justify-content: space-between; padding: 0 4px 0 6px; font-size: 12px; color: #222; }
.dots { width: 22px; display: flex; flex-direction: column; align-items: center; justify-content: center; gap: 2px; }
.dots i { width: 2.500px; height: 2.500px; background: #444; }
.fbtns { width: 84px; background: #fff; border: 1px solid #dadada; border-radius: 4px; display: flex; align-items: center; gap: 9px; padding-left: 5px; }
.fbtns em { font: italic 16px "Liberation Serif", serif; color: #333; margin-right: -5px; }
.finput { margin-left: 5px; flex: 1; background: #fff; border: 1px solid #dadada; border-radius: 4px; display: flex; align-items: center; justify-content: flex-end; padding-right: 3px; }

/* sheet */
.work { display: flex; flex: none; height: 461px; }
.vscroll { width: 22px; padding: 11px 3px 3px 2px; flex: none; display: flex; flex-direction: column; align-items: center; background: linear-gradient(#f5f5f5, #f5f5f5) 2px 4px/17px 100% no-repeat; }
.thumb { width: 9px; height: 415px; border-radius: 5px; background: #6f706e; margin-top: 4px; }
.vb { margin-top: auto; }
.sheet { width: 1344px; overflow: hidden; direction: rtl; background: #fff; font: 10px/15px "Liberation Sans", "DejaVu Sans", sans-serif; color: #111; border-bottom: 1px solid #d8d8d8; }
.r { display: grid; grid-template-columns: 22px repeat(30, 45px); height: 14px; width: 1372px; }
.r > span { overflow: hidden; white-space: nowrap; }
.n { background: #efefef; border-bottom: 1px solid #cfcfcf; border-left: 1px solid #aaa; text-align: center; font-size: 11px; line-height: 14px; color: #444; direction: ltr; }
.hd { height: 18px; background: #efefef; border-bottom: 1px solid #a8a8a8; }
.hd > span { text-align: center; font-size: 10.500px; line-height: 21px; color: #444; border-left: 1px solid #d4d4d4; direction: ltr; }
.tall { height: 43px; }
.r2 { height: 13px; }
.tall .n { line-height: 60px; }
.title { background: #9dc3e6; color: #fff; text-align: center; font: 27px/43px "DejaVu Sans", sans-serif; margin-left: -1px; }
.s2 { grid-column: span 2; } .s3 { grid-column: span 3; } .s8 { grid-column: span 8; } .s25 { grid-column: span 25; }

.kp { background: #2f5496; color: #fff; font: 7.800px/15px "DejaVu Sans", sans-serif; text-align: center; }
.kv { font: 700 11px/14px "Liberation Sans", sans-serif; text-align: right; padding-right: 3px; }
.tot { color: #fff; font: 700 7.800px/15px "DejaVu Sans", sans-serif; text-align: center; }
.tb1 { background: #5b9bd5; }
.tb2 { background: #a9d08e; }
.bar { margin-right: 2px; color: #111; text-align: center; direction: ltr; margin-left: -1px; font-size: 10.500px; line-height: 14px; }
.b1 { background: #638ec6; border-left: 3px solid #2f5597; }
.b2 { background: #a9d18e; border-left: 2px solid #a9d18e; }

.gl1 { text-align: center; font: 8px/15px "DejaVu Sans", sans-serif; color: #222; }
.gok { text-align: center; font: 8px/15px "DejaVu Sans", sans-serif; background: #c6efce; color: #006100; }
.fg { background: #c6e0b4; }
.fb { background: #8eaadb; }
.fy { background: #ffe999; }
.fo { background: #f4b183; }
.kpi { display: grid; grid-template-columns: 1fr auto 1fr; direction: ltr; align-items: center; }
.kpi svg { margin: -1px 0 0 3px; }

.lb { background: #f2f2f2; text-align: center; font: 8px/15px "DejaVu Sans", sans-serif; color: #222; }
.lb em { font: normal 10.500px/15px "Liberation Sans", sans-serif; }
.lbh { background: #bfbfbf; font-weight: 700; text-decoration: underline; }
.wk { display: grid; grid-column: span 7; grid-template-columns: repeat(7, 45px); height: 14px; overflow: hidden; }
.wk > span { text-align: right; padding-right: 2px; white-space: nowrap; }
.wk.o { grid-column: span 8; grid-template-columns: repeat(8, 45px); }
.g { background: #c6efce; color: #006100; }
.b { background: #8eaadb; color: #0b1c44; }
.y { background: #ffe999; color: #7f5a00; }
.o { background: #f4b183; color: #1c1c1c; }
.hr .wk > span { font: 8px/14px "DejaVu Sans", sans-serif; color: #222; padding-right: 3px; word-spacing: -2px; }
.hr em { font: normal 11px/14px "Liberation Sans", sans-serif; }
.hr .g, .r12 .g { background: #c6e0b4; }
.hr .b, .r12 .b { background: #b4c6e7; }
.r12 .o { background: #f8cbad; }
.r12 .wk { display: block; text-align: center; color: #222; font: 8px/15px "DejaVu Sans", sans-serif; }

/* sheet tabs */
.sheetbar { height: 30px; display: flex; align-items: center; flex: none; position: relative; }
.hscroll { margin-left: 19px; width: 508px; height: 17px; border-radius: 8px; background: #f5f5f5; display: flex; align-items: center; padding: 0 5px; justify-content: space-between; }
.hthumb { width: 17px; height: 9px; border-radius: 5px; background: #6f706e; margin-left: auto; margin-right: 6px; }
.split { margin-left: 16px; display: flex; flex-direction: column; gap: 2px; }
.split i { width: 2px; height: 2px; background: #333; }
.plus { margin-left: 588px; }
.sb-sep { margin-left: 43px; width: 1px; height: 18px; background: #d0d0d0; }
.stab { margin-left: 3px; width: 57px; height: 26px; margin-top: -4px; background: #fff; border-radius: 0 0 5px 5px; font-size: 12px; font-weight: 600; text-align: center; line-height: 26px; color: #333; position: relative; }
.stab::after { content: ""; position: absolute; left: 8px; right: 8px; bottom: 3px; height: 2px; background: #107c41; }
.nav1 { margin-left: 49px; }
.nav2 { margin-left: 26px; }
.mark { position: absolute; left: 592px; top: -9px; font: 50px/50px "DejaVu Sans", sans-serif; color: #e4e4e4; direction: rtl; }

/* status */
.status { height: 19px; border-top: 1px solid #fff; padding-top: 2px; display: flex; align-items: center; flex: none; font-size: 10.500px; color: #333; position: relative; }
.ready { margin-left: 12px; width: 50px; }
.acct { margin-left: 4px; width: 992px; font-weight: 600; white-space: nowrap; }
.view { width: 40px; height: 17px; display: flex; align-items: center; justify-content: center; }
.view.on { background: #dcdcdc; }
.zm { margin-left: 6px; }
.slider { margin-left: 5px; width: 100px; height: 1px; background: #555; position: relative; }
.tick { position: absolute; left: 50px; top: -2px; width: 1px; height: 5px; background: #555; }
.sth { position: absolute; left: 32px; top: -5px; width: 5px; height: 11px; background: #555; }
.zp { margin-left: 4px; }
.pct { margin-left: 10px; }
```
